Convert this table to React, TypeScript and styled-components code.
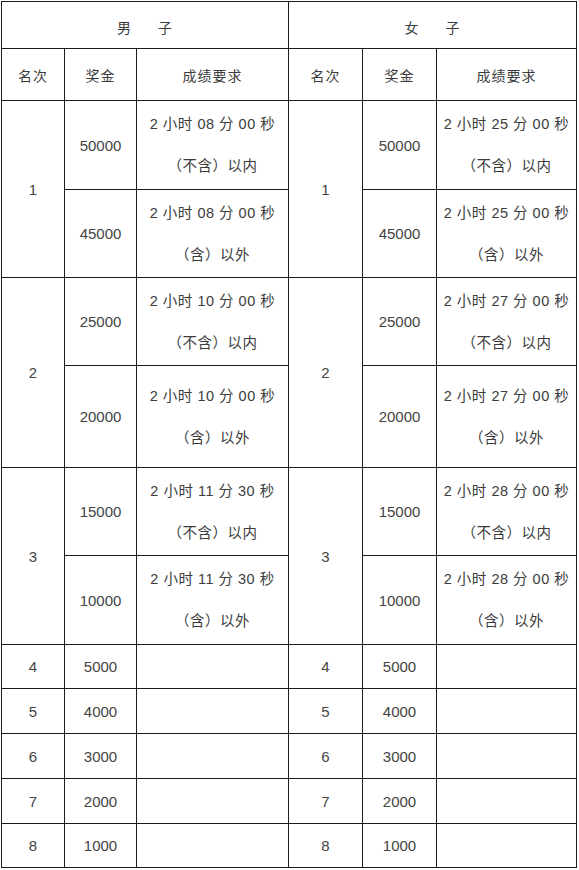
import React from "react";
import styled, { createGlobalStyle } from "styled-components";

const GlobalStyle = createGlobalStyle`
  html, body {
    margin: 0;
    padding: 0;
    background: #ffffff;
  }
  body {
    font-family: "Liberation Sans", "Noto Sans CJK SC", sans-serif;
  }
`;

interface Tier {
  prize: string;
  time: string;
  note: string;
}

interface Rank {
  place: number;
  tiers: Tier[];
  heights: number[];
}

interface Group {
  title: [string, string];
  ranks: Rank[];
}

const makeRank = (
  place: number,
  prizes: [string, string],
  time: string,
  heights: number[]
): Rank => ({
  place,
  heights,
  tiers: [
    { prize: prizes[0], time, note: "（不含）以内" },
    { prize: prizes[1], time, note: "（含）以外" }
  ]
});

const rankHeights = [
  [89, 88],
  [88, 102],
  [88, 89]
];

const men: Group = {
  title: ["男", "子"],
  ranks: [
    makeRank(1, ["50000", "45000"], "2 小时 08 分 00 秒", rankHeights[0]),
    makeRank(2, ["25000", "20000"], "2 小时 10 分 00 秒", rankHeights[1]),
    makeRank(3, ["15000", "10000"], "2 小时 11 分 30 秒", rankHeights[2])
  ]
};

const women: Group = {
  title: ["女", "子"],
  ranks: [
    makeRank(1, ["50000", "45000"], "2 小时 25 分 00 秒", rankHeights[0]),
    makeRank(2, ["25000", "20000"], "2 小时 27 分 00 秒", rankHeights[1]),
    makeRank(3, ["15000", "10000"], "2 小时 28 分 00 秒", rankHeights[2])
  ]
};

const lowerPrizes = [
  { place: 4, prize: "5000", height: 44 },
  { place: 5, prize: "4000", height: 45 },
  { place: 6, prize: "3000", height: 45 },
  { place: 7, prize: "2000", height: 45 },
  { place: 8, prize: "1000", height: 44 }
];

const columns = [63, 72, 152, 74, 74, 140];

export default function App() {
  const groups = [men, women];

  return (
    <Page>
      <GlobalStyle />
      <Table>
        <colgroup>
          {columns.map((w, i) => (
            <col key={i} style={{ width: w }} />
          ))}
        </colgroup>
        <thead>
          <Row $height={47}>
            {groups.map((g) => (
              <HeadCell key={g.title[0]} colSpan={3}>
                <Title>
                  <span>{g.title[0]}</span>
                  <span>{g.title[1]}</span>
                </Title>
              </HeadCell>
            ))}
          </Row>
          <Row $height={52}>
            {groups.map((g) => (
              <React.Fragment key={g.title[0]}>
                <HeadCell>名次</HeadCell>
                <HeadCell>奖金</HeadCell>
                <HeadCell>成绩要求</HeadCell>
              </React.Fragment>
            ))}
          </Row>
        </thead>
        <tbody>
          {men.ranks.map((rank, ri) =>
            rank.tiers.map((_, ti) => (
              <Row key={`${ri}-${ti}`} $height={rank.heights[ti]}>
                {groups.map((g) => {
                  const r = g.ranks[ri];
                  const tier = r.tiers[ti];
                  return (
                    <React.Fragment key={g.title[0]}>
                      {ti === 0 && <NumberCell rowSpan={2}>{r.place}</NumberCell>}
                      <NumberCell>{tier.prize}</NumberCell>
                      <Cell>
                        <Requirement>
                          <span>{tier.time}</span>
                          <span>{tier.note}</span>
                        </Requirement>
                      </Cell>
                    </React.Fragment>
                  );
                })}
              </Row>
            ))
          )}
          {lowerPrizes.map((p) => (
            <Row key={p.place} $height={p.height}>
              {groups.map((g) => (
                <React.Fragment key={g.title[0]}>
                  <NumberCell>{p.place}</NumberCell>
                  <NumberCell>{p.prize}</NumberCell>
                  <Cell />
                </React.Fragment>
              ))}
            </Row>
          ))}
        </tbody>
      </Table>
    </Page>
  );
}

const Page = styled.div`
  padding: 1px 0 0 1px;
  width: 579px;
  height: 870px;
  box-sizing: border-box;
  background: #fff;
`;

const Table = styled.table`
  border-collapse: collapse;
  table-layout: fixed;
  width: 576px;
  color: #3c3c3c;
  font-size: 14.5px;
`;

const Row = styled.tr<{ $height: number }>`
  height: ${(p) => p.$height}px;
`;

const Cell = styled.td`
  border: 1px solid #1c1c1c;
  padding: 0;
  text-align: center;
  vertical-align: middle;
  white-space: nowrap;
`;

const NumberCell = styled(Cell)`
  font-size: 15px;
  color: #444;
`;

const HeadCell = styled.th`
  border: 1px solid #1c1c1c;
  padding: 0;
  text-align: center;
  vertical-align: middle;
  font-weight: normal;
  font-size: 14px;
  letter-spacing: 1px;
`;

const Title = styled.span`
  display: inline-flex;
  gap: 26px;
  padding-top: 4px;
`;

const Requirement = styled.div`
  display: flex;
  flex-direction: column;
  align-items: center;
  line-height: 42px;
  font-size: 14.5px;
  letter-spacing: 0.5px;
`;
